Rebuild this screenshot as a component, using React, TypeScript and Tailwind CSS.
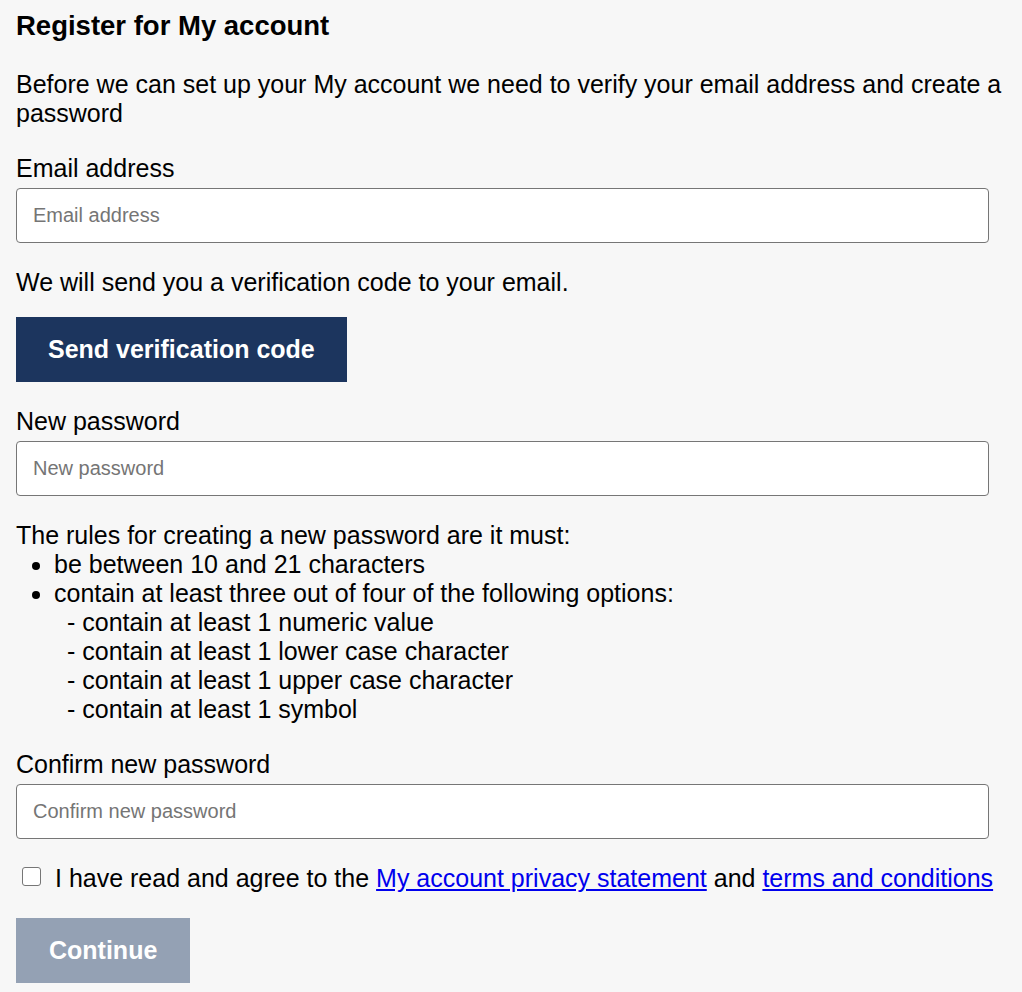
import React, { useState } from 'react';

const inputClass =
  "mt-[5px] block h-[55px] w-[973px] rounded-[4px] border border-[#767676] bg-white px-4 text-[20px] leading-[1.15] text-black outline-none placeholder:text-[#757575]";

const Field: React.FC<{ id: string; label: string; type?: string }> = ({ id, label, type = 'text' }) => {
  const [value, setValue] = useState('');
  return (
    <div>
      <label htmlFor={id} className="block">
        {label}
      </label>
      <input
        id={id}
        type={type}
        value={value}
        onChange={(e) => setValue(e.target.value)}
        placeholder={label}
        className={inputClass}
      />
    </div>
  );
};

const rules = [
  'contain at least 1 numeric value',
  'contain at least 1 lower case character',
  'contain at least 1 upper case character',
  'contain at least 1 symbol',
];

export default function App() {
  const [agreed, setAgreed] = useState(false);

  return (
    <div className="min-h-screen bg-[#f7f7f7] px-4 pt-[10px] pb-2 font-['Liberation_Sans',Arial,sans-serif] text-[25px] leading-[29px] text-black">
      <h1 className="text-[27.5px] font-bold leading-[1.15]">Register for My account</h1>

      <p className="mt-[28px]">
        Before we can set up your My account we need to verify your email address and create a password
      </p>

      <div className="mt-[26px]">
        <Field id="email" label="Email address" type="email" />
      </div>

      <p className="mt-[25px]">We will send you a verification code to your email.</p>

      <button className="mt-[20px] h-[65px] bg-[#1c355e] px-[32px] text-[25px] font-bold leading-[1.15] text-white">
        Send verification code
      </button>

      <div className="mt-[25px]">
        <Field id="password" label="New password" type="password" />
      </div>

      <div className="mt-[25px]">
        <p>The rules for creating a new password are it must:</p>
        <ul className="list-disc pl-[38px]">
          <li>be between 10 and 21 characters</li>
          <li>
            contain at least three out of four of the following options:
            {rules.map((r) => (
              <div key={r} className="pl-[13px]">
                - {r}
              </div>
            ))}
          </li>
        </ul>
      </div>

      <div className="mt-[26px]">
        <Field id="confirm" label="Confirm new password" type="password" />
      </div>

      <div className="mt-[25px] flex items-center">
        <input
          id="agree"
          type="checkbox"
          checked={agreed}
          onChange={(e) => setAgreed(e.target.checked)}
          className="ml-[6px] mr-[14px] h-[19px] w-[19px] -translate-y-[2px] appearance-none rounded-[3px] border border-[#767676] bg-white"
        />
        <label htmlFor="agree">
          I have read and agree to the{' '}
          <a href="#" className="text-[#0000ee] underline">
            My account privacy statement
          </a>{' '}
          and{' '}
          <a href="#" className="text-[#0000ee] underline">
            terms and conditions
          </a>
        </label>
      </div>

      <button
        disabled={!agreed}
        className="mt-[25px] h-[65px] bg-[#94a1b4] px-[33px] text-[25px] font-bold leading-[1.15] text-white"
      >
        Continue
      </button>
    </div>
  );
}
